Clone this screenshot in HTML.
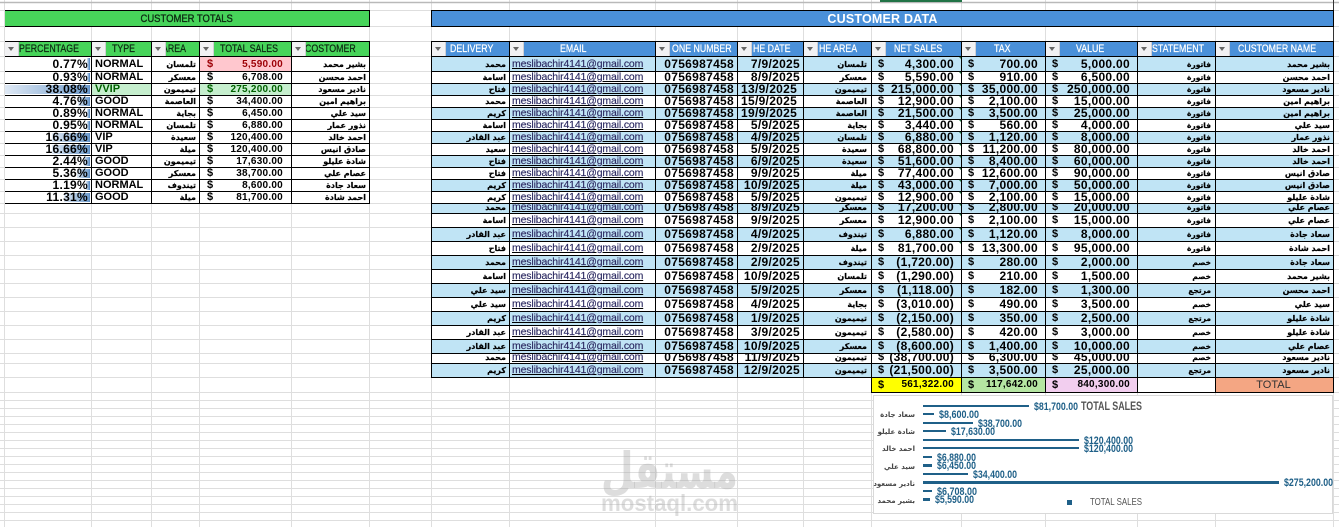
<!DOCTYPE html>
<html><head><meta charset="utf-8"><style>
html,body{margin:0;padding:0;background:#fff}
body{width:1339px;height:527px;overflow:hidden;position:relative;font-family:"Liberation Sans","DejaVu Sans",sans-serif;color:#000}
.abs{position:absolute}
.title{position:absolute;top:10px;height:17px;box-sizing:border-box;border:1px solid #000;text-align:center;line-height:16px}
.title span{display:inline-block;transform:scaleX(.86);line-height:17px}
.tb{position:absolute;top:41px}
.h{display:flex;height:16px;box-sizing:border-box;border-top:1px solid #000;border-bottom:1px solid #000}
.h>div{position:relative;box-sizing:border-box;border-right:1px solid #000;height:14px;overflow:hidden;font-size:11px;line-height:15px;-webkit-text-stroke:.25px}
.h b{font-weight:normal;position:absolute;top:0;white-space:nowrap;transform:scaleX(.8);transform-origin:left center}
.h i{position:absolute;z-index:1;left:0;top:0;width:13px;height:14px;background:#f1f1f3;border-right:1px solid #cfcfd4}
.h i:after{content:"";position:absolute;left:3px;top:5px;border-left:3.5px solid transparent;border-right:3.5px solid transparent;border-top:4px solid #666}
.gh>div{background:#47d45a;color:#0d2a12}
.bh>div{background:#4a90d9;color:#fff}
.r{display:flex;height:12px;box-sizing:border-box;border-bottom:1px solid #000;overflow:hidden;font-size:12px;line-height:11px;font-weight:bold;letter-spacing:.3px}
.r>div{position:relative;box-sizing:border-box;border-right:1px solid #000;height:100%;text-align:right;padding-right:3px;white-space:nowrap;overflow:hidden}
.r.t{height:15px;line-height:15px}
.r.m{height:14px;line-height:13px}
.r.s{height:10px;line-height:7px}
.a{font-family:"DejaVu Sans",sans-serif;font-size:8px;letter-spacing:0;-webkit-text-stroke:.2px}
.st{font-size:7.5px;padding-right:4px!important}
.e{text-align:left!important;padding-left:2px;font-weight:normal;letter-spacing:-.15px;font-size:10.5px;color:#2c2a62;text-decoration:underline;text-decoration-color:#000;-webkit-text-stroke:.15px}
.l{text-align:left!important;padding-left:3px}
.m2{padding-right:2px!important}
.n{padding-right:7px!important}
.n u{position:absolute;left:6px;top:0;text-decoration:none;font-size:11px}
.d .r:nth-child(odd)>div{background:#c0e4f5}
.d .r>div:nth-child(1){width:78px}.d .r>div:nth-child(2){width:146px}.d .r>div:nth-child(3){width:82px}.d .r>div:nth-child(4){width:66px}.d .r>div:nth-child(5){width:68px;padding-right:4px}.d .r>div:nth-child(6){width:90px}.d .r>div:nth-child(7){width:84px}.d .r>div:nth-child(8){width:92px}.d .r>div:nth-child(9){width:78px}.d .r>div:nth-child(10){width:118px}
.d .h>div:nth-child(1){width:78px}.d .h>div:nth-child(2){width:146px}.d .h>div:nth-child(3){width:82px}.d .h>div:nth-child(4){width:66px}.d .h>div:nth-child(5){width:68px}.d .h>div:nth-child(6){width:90px}.d .h>div:nth-child(7){width:84px}.d .h>div:nth-child(8){width:92px}.d .h>div:nth-child(9){width:78px}.d .h>div:nth-child(10){width:118px}
.d .r:nth-child(-n+16)>div:nth-child(6)::after{content:"";position:absolute;right:0;top:0;border-top:2px solid #1c7a3c;border-left:2px solid transparent}
.p .r>div:nth-child(1),.p .h>div:nth-child(1){width:87px}.p .r>div:nth-child(2),.p .h>div:nth-child(2){width:60px}.p .r>div:nth-child(3),.p .h>div:nth-child(3){width:48px}.p .r>div:nth-child(4),.p .h>div:nth-child(4){width:92px}.p .r>div:nth-child(5),.p .h>div:nth-child(5){width:78px}
.p .r>div:nth-child(2){text-align:left;padding-left:3px;font-size:11px;letter-spacing:0}
.p .r>div:nth-child(4){font-size:10px;letter-spacing:.25px;padding-right:8px}
.p .r>div:nth-child(4) u{position:absolute;left:7px;top:0;text-decoration:none;font-size:11px}
.bar{position:absolute;right:1px;top:1px;bottom:1px;background:linear-gradient(to left,#6f9ccc,#dfe9f5);border-right:1px solid #5f90c8}
.p .r span{position:relative}
.tot{position:absolute;left:872px;top:378px;display:flex;height:15px;box-sizing:border-box;border-bottom:1px solid #000;font-size:10px;font-weight:bold;letter-spacing:.25px;line-height:14px}
.tot>div{position:relative;box-sizing:border-box;border-right:1px solid #000;text-align:right;padding-right:7px;height:14px}
.tot u{position:absolute;left:6px;top:0;text-decoration:none;font-size:11px}
</style></head><body>
<svg class="abs" style="left:0;top:0" width="1339" height="527"><path fill="none" stroke="#dedede" d="M0 10.5H1339M0 26.5H1339M0 41.5H1339M0 56.5H1339M0 71.5H1339M0 83.5H1339M0 95.5H1339M0 107.5H1339M0 119.5H1339M0 131.5H1339M0 143.5H1339M0 155.5H1339M0 167.5H1339M0 179.5H1339M0 191.5H1339M0 203.5H1339M0 213.5H1339M0 227.5H1339M0 241.5H1339M0 255.5H1339M0 269.5H1339M0 283.5H1339M0 297.5H1339M0 311.5H1339M0 325.5H1339M0 339.5H1339M0 353.5H1339M0 363.5H1339M0 377.5H1339M0 392.5H1339M0 400.5H1339M0 408.5H1339M0 416.5H1339M0 424.5H1339M0 432.5H1339M0 440.5H1339M0 448.5H1339M0 456.5H1339M0 464.5H1339M0 472.5H1339M0 480.5H1339M0 488.5H1339M0 496.5H1339M0 504.5H1339M0 512.5H1339M0 520.5H1339M4.5 0V527M91.5 0V527M151.5 0V527M199.5 0V527M291.5 0V527M369.5 0V527M431.5 0V527M509.5 0V527M655.5 0V527M737.5 0V527M803.5 0V527M871.5 0V527M961.5 0V527M1045.5 0V527M1137.5 0V527M1215.5 0V527M1333.5 0V527"/><path stroke="#b9b9b9" stroke-width="1.5" d="M0 2.5H1339"/><path stroke="#217346" stroke-width="2" d="M880 1H962"/><path stroke="#333" d="M1333.5 0V392"/></svg>

<div class="title" style="left:5px;width:365px;background:#47d45a;color:#0d2a12;font-size:11px;-webkit-text-stroke:.35px;border-left:none"><span>CUSTOMER TOTALS</span></div>
<div class="title" style="left:431px;width:903px;background:#4a90d9;color:#fff;font-size:12.5px;font-weight:bold;letter-spacing:.2px">CUSTOMER DATA</div>

<div class="tb p" style="left:5px;width:365px">
<div class="h gh"><div><i></i><b style="left:14px">PERCENTAGE</b></div><div><i></i><b style="left:20px">TYPE</b></div><div><i></i><b style="left:10px">AREA</b></div><div><i></i><b style="left:20px">TOTAL SALES</b></div><div><i></i><b style="left:13px">COSTOMER</b></div></div>
<div class="r t"><div><em class="bar" style="width:2px"></em><span>0.77%</span></div><div>NORMAL</div><div class="a">تلمسان</div><div style="background:#ffc7ce;color:#9c0006"><u>$</u>5,590.00</div><div class="a">بشير محمد</div></div>
<div class="r"><div><em class="bar" style="width:2px"></em><span>0.93%</span></div><div>NORMAL</div><div class="a">معسكر</div><div><u>$</u>6,708.00</div><div class="a">احمد محسن</div></div>
<div class="r"><div><em class="bar" style="width:84px"></em><span>38.08%</span></div><div style="background:#c6efce;color:#006100">VVIP</div><div class="a">تيميمون</div><div style="background:#c6efce;color:#006100"><u>$</u>275,200.00</div><div class="a">نادير مسعود</div></div>
<div class="r"><div><em class="bar" style="width:11px"></em><span>4.76%</span></div><div>GOOD</div><div class="a">العاصمة</div><div><u>$</u>34,400.00</div><div class="a">براهيم امين</div></div>
<div class="r"><div><em class="bar" style="width:2px"></em><span>0.89%</span></div><div>NORMAL</div><div class="a">بجاية</div><div><u>$</u>6,450.00</div><div class="a">سيد علي</div></div>
<div class="r"><div><em class="bar" style="width:2px"></em><span>0.95%</span></div><div>NORMAL</div><div class="a">تلمسان</div><div><u>$</u>6,880.00</div><div class="a">نذور عمار</div></div>
<div class="r"><div><em class="bar" style="width:37px"></em><span>16.66%</span></div><div>VIP</div><div class="a">سعيدة</div><div><u>$</u>120,400.00</div><div class="a">احمد خالد</div></div>
<div class="r"><div><em class="bar" style="width:37px"></em><span>16.66%</span></div><div>VIP</div><div class="a">ميلة</div><div><u>$</u>120,400.00</div><div class="a">صادق انيس</div></div>
<div class="r"><div><em class="bar" style="width:5px"></em><span>2.44%</span></div><div>GOOD</div><div class="a">تيميمون</div><div><u>$</u>17,630.00</div><div class="a">شادة عليلو</div></div>
<div class="r"><div><em class="bar" style="width:12px"></em><span>5.36%</span></div><div>GOOD</div><div class="a">معسكر</div><div><u>$</u>38,700.00</div><div class="a">عصام علي</div></div>
<div class="r"><div><em class="bar" style="width:3px"></em><span>1.19%</span></div><div>NORMAL</div><div class="a">تيندوف</div><div><u>$</u>8,600.00</div><div class="a">سعاد جادة</div></div>
<div class="r"><div><em class="bar" style="width:25px"></em><span>11.31%</span></div><div>GOOD</div><div class="a">ميلة</div><div><u>$</u>81,700.00</div><div class="a">احمد شادة</div></div>
</div>

<div class="abs" style="left:431px;top:41px;width:1px;height:337px;background:#000"></div>
<div class="tb d" style="left:432px;width:902px">
<div class="h bh" style="position:absolute;top:0;left:0"><div><i></i><b style="left:18px">DELIVERY</b></div><div><i></i><b style="left:50px">EMAIL</b></div><div><i></i><b style="left:16px">ONE NUMBER</b></div><div><i></i><b style="left:15px">HE DATE</b></div><div><i></i><b style="left:15px">HE AREA</b></div><div><i></i><b style="left:22px">NET SALES</b></div><div><i></i><b style="left:32px">TAX</b></div><div><i></i><b style="left:30px">VALUE</b></div><div><i></i><b style="left:14px">STATEMENT</b></div><div><i></i><b style="left:22px">CUSTOMER NAME</b></div></div>
<div style="position:absolute;top:16px;left:0;width:902px" class="d">
<div class="r t"><div class="a">محمد</div><div class="e">meslibachir4141@gmail.com</div><div>0756987458</div><div>7/9/2025</div><div class="a">تلمسان</div><div class="n"><u>$</u>4,300.00</div><div class="n"><u>$</u>700.00</div><div class="n"><u>$</u>5,000.00</div><div class="a st">فاتورة</div><div class="a">بشير محمد</div></div>
<div class="r"><div class="a">اسامة</div><div class="e">meslibachir4141@gmail.com</div><div>0756987458</div><div>8/9/2025</div><div class="a">معسكر</div><div class="n"><u>$</u>5,590.00</div><div class="n"><u>$</u>910.00</div><div class="n"><u>$</u>6,500.00</div><div class="a st">فاتورة</div><div class="a">احمد محسن</div></div>
<div class="r"><div class="a">فتاح</div><div class="e">meslibachir4141@gmail.com</div><div>0756987458</div><div class="l">13/9/2025</div><div class="a">تيميمون</div><div class="n"><u>$</u>215,000.00</div><div class="n"><u>$</u>35,000.00</div><div class="n"><u>$</u>250,000.00</div><div class="a st">فاتورة</div><div class="a">نادير مسعود</div></div>
<div class="r"><div class="a">محمد</div><div class="e">meslibachir4141@gmail.com</div><div>0756987458</div><div class="l">15/9/2025</div><div class="a">العاصمة</div><div class="n"><u>$</u>12,900.00</div><div class="n"><u>$</u>2,100.00</div><div class="n"><u>$</u>15,000.00</div><div class="a st">فاتورة</div><div class="a">براهيم امين</div></div>
<div class="r"><div class="a">كريم</div><div class="e">meslibachir4141@gmail.com</div><div>0756987458</div><div class="l">19/9/2025</div><div class="a">العاصمة</div><div class="n"><u>$</u>21,500.00</div><div class="n"><u>$</u>3,500.00</div><div class="n"><u>$</u>25,000.00</div><div class="a st">فاتورة</div><div class="a">براهيم امين</div></div>
<div class="r"><div class="a">اسامة</div><div class="e">meslibachir4141@gmail.com</div><div>0756987458</div><div>5/9/2025</div><div class="a">بجاية</div><div class="n"><u>$</u>3,440.00</div><div class="n"><u>$</u>560.00</div><div class="n"><u>$</u>4,000.00</div><div class="a st">فاتورة</div><div class="a">سيد علي</div></div>
<div class="r"><div class="a">عبد القادر</div><div class="e">meslibachir4141@gmail.com</div><div>0756987458</div><div>4/9/2025</div><div class="a">تلمسان</div><div class="n"><u>$</u>6,880.00</div><div class="n"><u>$</u>1,120.00</div><div class="n"><u>$</u>8,000.00</div><div class="a st">فاتورة</div><div class="a">نذور عمار</div></div>
<div class="r"><div class="a">سعيد</div><div class="e">meslibachir4141@gmail.com</div><div>0756987458</div><div>5/9/2025</div><div class="a">سعيدة</div><div class="n"><u>$</u>68,800.00</div><div class="n"><u>$</u>11,200.00</div><div class="n"><u>$</u>80,000.00</div><div class="a st">فاتورة</div><div class="a">احمد خالد</div></div>
<div class="r"><div class="a">فتاح</div><div class="e">meslibachir4141@gmail.com</div><div>0756987458</div><div>6/9/2025</div><div class="a">سعيدة</div><div class="n"><u>$</u>51,600.00</div><div class="n"><u>$</u>8,400.00</div><div class="n"><u>$</u>60,000.00</div><div class="a st">فاتورة</div><div class="a">احمد خالد</div></div>
<div class="r"><div class="a">فتاح</div><div class="e">meslibachir4141@gmail.com</div><div>0756987458</div><div>9/9/2025</div><div class="a">ميلة</div><div class="n"><u>$</u>77,400.00</div><div class="n"><u>$</u>12,600.00</div><div class="n"><u>$</u>90,000.00</div><div class="a st">فاتورة</div><div class="a">صادق انيس</div></div>
<div class="r"><div class="a">كريم</div><div class="e">meslibachir4141@gmail.com</div><div>0756987458</div><div>10/9/2025</div><div class="a">ميلة</div><div class="n"><u>$</u>43,000.00</div><div class="n"><u>$</u>7,000.00</div><div class="n"><u>$</u>50,000.00</div><div class="a st">فاتورة</div><div class="a">صادق انيس</div></div>
<div class="r"><div class="a">كريم</div><div class="e">meslibachir4141@gmail.com</div><div>0756987458</div><div>5/9/2025</div><div class="a">تيميمون</div><div class="n"><u>$</u>12,900.00</div><div class="n"><u>$</u>2,100.00</div><div class="n"><u>$</u>15,000.00</div><div class="a st">فاتورة</div><div class="a">شادة عليلو</div></div>
<div class="r s"><div class="a">محمد</div><div class="e">meslibachir4141@gmail.com</div><div>0756987458</div><div>8/9/2025</div><div class="a">معسكر</div><div class="n"><u>$</u>17,200.00</div><div class="n"><u>$</u>2,800.00</div><div class="n"><u>$</u>20,000.00</div><div class="a st">فاتورة</div><div class="a">عصام علي</div></div>
<div class="r m"><div class="a">اسامة</div><div class="e">meslibachir4141@gmail.com</div><div>0756987458</div><div>9/9/2025</div><div class="a">معسكر</div><div class="n"><u>$</u>12,900.00</div><div class="n"><u>$</u>2,100.00</div><div class="n"><u>$</u>15,000.00</div><div class="a st">فاتورة</div><div class="a">عصام علي</div></div>
<div class="r m"><div class="a">عبد القادر</div><div class="e">meslibachir4141@gmail.com</div><div>0756987458</div><div>4/9/2025</div><div class="a">تيندوف</div><div class="n"><u>$</u>6,880.00</div><div class="n"><u>$</u>1,120.00</div><div class="n"><u>$</u>8,000.00</div><div class="a st">فاتورة</div><div class="a">سعاد جادة</div></div>
<div class="r m"><div class="a">فتاح</div><div class="e">meslibachir4141@gmail.com</div><div>0756987458</div><div>2/9/2025</div><div class="a">ميلة</div><div class="n"><u>$</u>81,700.00</div><div class="n"><u>$</u>13,300.00</div><div class="n"><u>$</u>95,000.00</div><div class="a st">فاتورة</div><div class="a">احمد شادة</div></div>
<div class="r m"><div class="a">محمد</div><div class="e">meslibachir4141@gmail.com</div><div>0756987458</div><div>2/9/2025</div><div class="a">تيندوف</div><div class="n"><u>$</u>(1,720.00)</div><div class="n"><u>$</u>280.00</div><div class="n"><u>$</u>2,000.00</div><div class="a st">خصم</div><div class="a">سعاد جادة</div></div>
<div class="r m"><div class="a">اسامة</div><div class="e">meslibachir4141@gmail.com</div><div>0756987458</div><div>10/9/2025</div><div class="a">تلمسان</div><div class="n"><u>$</u>(1,290.00)</div><div class="n"><u>$</u>210.00</div><div class="n"><u>$</u>1,500.00</div><div class="a st">خصم</div><div class="a">بشير محمد</div></div>
<div class="r m"><div class="a">سيد علي</div><div class="e">meslibachir4141@gmail.com</div><div>0756987458</div><div>5/9/2025</div><div class="a">معسكر</div><div class="n m2"><u>$</u>(1,118.00)</div><div class="n"><u>$</u>182.00</div><div class="n"><u>$</u>1,300.00</div><div class="a st">مرتجع</div><div class="a">احمد محسن</div></div>
<div class="r m"><div class="a">سيد علي</div><div class="e">meslibachir4141@gmail.com</div><div>0756987458</div><div>4/9/2025</div><div class="a">بجاية</div><div class="n"><u>$</u>(3,010.00)</div><div class="n"><u>$</u>490.00</div><div class="n"><u>$</u>3,500.00</div><div class="a st">خصم</div><div class="a">سيد علي</div></div>
<div class="r m"><div class="a">كريم</div><div class="e">meslibachir4141@gmail.com</div><div>0756987458</div><div>1/9/2025</div><div class="a">تيميمون</div><div class="n"><u>$</u>(2,150.00)</div><div class="n"><u>$</u>350.00</div><div class="n"><u>$</u>2,500.00</div><div class="a st">مرتجع</div><div class="a">شادة عليلو</div></div>
<div class="r m"><div class="a">عبد القادر</div><div class="e">meslibachir4141@gmail.com</div><div>0756987458</div><div>3/9/2025</div><div class="a">تيميمون</div><div class="n"><u>$</u>(2,580.00)</div><div class="n"><u>$</u>420.00</div><div class="n"><u>$</u>3,000.00</div><div class="a st">خصم</div><div class="a">شادة عليلو</div></div>
<div class="r m"><div class="a">عبد القادر</div><div class="e">meslibachir4141@gmail.com</div><div>0756987458</div><div>10/9/2025</div><div class="a">معسكر</div><div class="n"><u>$</u>(8,600.00)</div><div class="n"><u>$</u>1,400.00</div><div class="n"><u>$</u>10,000.00</div><div class="a st">خصم</div><div class="a">عصام علي</div></div>
<div class="r s"><div class="a">محمد</div><div class="e">meslibachir4141@gmail.com</div><div>0756987458</div><div>11/9/2025</div><div class="a">تيميمون</div><div class="n"><u>$</u>(38,700.00)</div><div class="n"><u>$</u>6,300.00</div><div class="n"><u>$</u>45,000.00</div><div class="a st">خصم</div><div class="a">نادير مسعود</div></div>
<div class="r m"><div class="a">كريم</div><div class="e">meslibachir4141@gmail.com</div><div>0756987458</div><div>12/9/2025</div><div class="a">تيميمون</div><div class="n"><u>$</u>(21,500.00)</div><div class="n"><u>$</u>3,500.00</div><div class="n"><u>$</u>25,000.00</div><div class="a st">مرتجع</div><div class="a">نادير مسعود</div></div>
</div>
</div>

<div class="tot" style="border-left:1px solid #000;left:871px">
<div style="width:90px;background:#ffff00"><u>$</u>561,322.00</div>
<div style="width:84px;background:#b5e6a2"><u>$</u>117,642.00</div>
<div style="width:92px;background:#f2ceef"><u>$</u>840,300.00</div>
<div style="width:78px;background:#fff"></div>
<div style="width:118px;background:#f4a683;text-align:center;font-weight:normal;font-size:11px;letter-spacing:0;padding-right:2px;color:#333">TOTAL</div>
</div>

<svg class="abs" style="left:873px;top:395px" width="460" height="119" font-family="Liberation Sans, DejaVu Sans, sans-serif">
<rect x=".5" y=".5" width="459" height="118" fill="#fff" stroke="#d9d9d9"/>
<g fill="#1f6088">
<rect x="50" y="10" width="106" height="2"/><rect x="50" y="18" width="11" height="2"/><rect x="50" y="27" width="50" height="2"/><rect x="50" y="35" width="23" height="2"/><rect x="50" y="44" width="156" height="2"/><rect x="50" y="52" width="156" height="2"/><rect x="50" y="61" width="9" height="2"/><rect x="50" y="69" width="9" height="3"/><rect x="50" y="78" width="45" height="2"/><rect x="50" y="86" width="356" height="3"/><rect x="50" y="95" width="9" height="2"/><rect x="50" y="103" width="7" height="3"/>
<rect x="194" y="105" width="5" height="5"/>
</g>
<g fill="#1f6088" font-size="11" font-weight="bold">
<text x="161" y="15" textLength="44" lengthAdjust="spacingAndGlyphs">$81,700.00</text>
<text x="66" y="23" textLength="40" lengthAdjust="spacingAndGlyphs">$8,600.00</text>
<text x="105" y="32" textLength="44" lengthAdjust="spacingAndGlyphs">$38,700.00</text>
<text x="78" y="40" textLength="44" lengthAdjust="spacingAndGlyphs">$17,630.00</text>
<text x="211" y="49" textLength="49" lengthAdjust="spacingAndGlyphs">$120,400.00</text>
<text x="211" y="57" textLength="49" lengthAdjust="spacingAndGlyphs">$120,400.00</text>
<text x="64" y="66" textLength="39" lengthAdjust="spacingAndGlyphs">$6,880.00</text>
<text x="64" y="74" textLength="39" lengthAdjust="spacingAndGlyphs">$6,450.00</text>
<text x="100" y="83" textLength="44" lengthAdjust="spacingAndGlyphs">$34,400.00</text>
<text x="411" y="91" textLength="49" lengthAdjust="spacingAndGlyphs">$275,200.00</text>
<text x="64" y="100" textLength="40" lengthAdjust="spacingAndGlyphs">$6,708.00</text>
<text x="62" y="108" textLength="39" lengthAdjust="spacingAndGlyphs">$5,590.00</text>
</g>
<text x="208" y="15" fill="#555" font-size="11.5" font-weight="bold" textLength="61" lengthAdjust="spacingAndGlyphs">TOTAL SALES</text>
<text x="217" y="110" fill="#555" font-size="10" textLength="52" lengthAdjust="spacingAndGlyphs">TOTAL SALES</text>
<g fill="#444" font-size="7" font-weight="bold" text-anchor="end" font-family="DejaVu Sans, sans-serif">
<text x="42" y="22">سعاد جادة</text><text x="42" y="39">شادة عليلو</text><text x="42" y="56">احمد خالد</text><text x="42" y="74">سيد علي</text><text x="42" y="91">نادير مسعود</text><text x="42" y="108">بشير محمد</text>
</g>
</svg>

<svg class="abs" style="left:600px;top:445px" width="140" height="75">
<g fill="rgba(170,170,170,.4)" font-weight="bold">
<text x="1" y="43" font-family="DejaVu Sans, sans-serif" font-size="50" textLength="137" lengthAdjust="spacingAndGlyphs">مستقل</text>
<text x="1" y="66" font-family="Liberation Sans, sans-serif" font-size="23" textLength="137" lengthAdjust="spacingAndGlyphs">mostaql.com</text>
</g>
</svg>
</body></html>
